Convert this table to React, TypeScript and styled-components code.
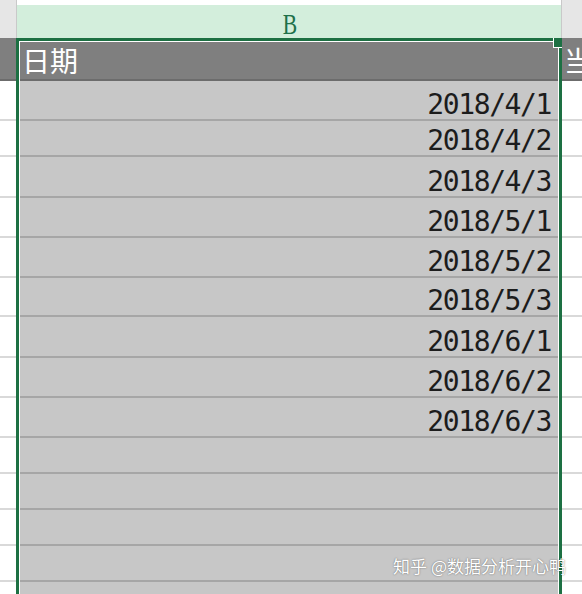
import React from "react";
import styled, { createGlobalStyle } from "styled-components";

const Global = createGlobalStyle`
  html, body { margin: 0; padding: 0; background: #ffffff; overflow: hidden; }
  #root { width: 582px; height: 594px; }
`;

const GREEN = "#1d7043";

const Page = styled.div`
  position: relative;
  width: 582px;
  height: 594px;
  overflow: hidden;
  background: #ffffff;
  font-family: "Noto Sans CJK SC", "Noto Sans", sans-serif;
`;

const GridRow = styled.div<{ $h: number }>`
  display: grid;
  grid-template-columns: 17px 544px 1fr;
  height: ${(p) => p.$h}px;
`;

const ColHeadSide = styled.div`
  background: #e6e6e6;
  border-right: 1px solid #c9c9c9;
`;

const ColHeadSideRight = styled.div`
  background: #e6e6e6;
  border-left: 1px solid #c9c9c9;
`;

const ColHeadMain = styled.div`
  margin-top: 5px;
  background: #d3eedc;
  border-bottom: 3px solid ${GREEN};
  display: flex;
  justify-content: center;
  align-items: flex-start;
  padding-top: 4px;
  padding-left: 3px;
`;

const ColLetter = styled.span`
  display: inline-block;
  font-family: "Liberation Serif", "DejaVu Serif", serif;
  font-size: 30px;
  line-height: 1;
  color: #20704a;
  transform: scaleX(0.72);
`;

const Cell = styled.div<{ $kind: "side" | "main" | "head" }>`
  box-sizing: border-box;
  overflow: hidden;
  white-space: nowrap;
  display: flex;
  background: ${(p) =>
    p.$kind === "head" ? "#7f7f7f" : p.$kind === "main" ? "#c7c7c7" : "#ffffff"};
  border-bottom: 2px solid
    ${(p) =>
      p.$kind === "head" ? "#6c6c6c" : p.$kind === "main" ? "#a6a6a6" : "#d9d9d9"};
`;

const HeadText = styled.span`
  font-family: "Noto Sans CJK SC", "Noto Sans", sans-serif;
  font-size: 28px;
  line-height: 1;
  color: #ffffff;
  align-self: center;
  padding-top: 2px;
`;

const HeadCell = styled(Cell)`
  padding-left: 5px;
`;

const HeadCellRight = styled(Cell)`
  padding-left: 3px;
`;

const DateCell = styled(Cell)`
  justify-content: flex-end;
  align-items: flex-end;
  padding-right: 10px;
`;

const DateText = styled.span`
  font-family: "DejaVu Sans Mono", "Liberation Mono", monospace;
  font-size: 28px;
  line-height: 1;
  letter-spacing: -1.4px;
  color: #1c1c1c;
`;

const Selection = styled.div`
  position: absolute;
  left: 16px;
  top: 38px;
  width: 546px;
  height: 600px;
  box-sizing: border-box;
  border: 3px solid ${GREEN};
  box-shadow: inset 0 0 0 1px #ffffff;
  pointer-events: none;
`;

const Handle = styled.div`
  position: absolute;
  left: 553px;
  top: 38px;
  width: 9px;
  height: 10px;
  box-sizing: border-box;
  background: ${GREEN};
  border-left: 1px solid #ffffff;
  border-bottom: 1px solid #ffffff;
`;

const Watermark = styled.div`
  position: absolute;
  right: 16px;
  top: 556px;
  font-family: "Noto Sans CJK SC", "Noto Sans", sans-serif;
  font-size: 17px;
  line-height: 1.2;
  color: #ffffff;
  text-shadow: 0 0 2px rgba(0, 0, 0, 0.35), 0 0 1px rgba(0, 0, 0, 0.3);
  white-space: nowrap;
`;

const rows: { h: number; v: string }[] = [
  { h: 40, v: "2018/4/1" },
  { h: 36, v: "2018/4/2" },
  { h: 41, v: "2018/4/3" },
  { h: 40, v: "2018/5/1" },
  { h: 40, v: "2018/5/2" },
  { h: 39, v: "2018/5/3" },
  { h: 41, v: "2018/6/1" },
  { h: 40, v: "2018/6/2" },
  { h: 40, v: "2018/6/3" },
  { h: 36, v: "" },
  { h: 36, v: "" },
  { h: 36, v: "" },
  { h: 36, v: "" },
  { h: 36, v: "" },
];

export default function App() {
  return (
    <>
      <Global />
      <Page>
        <GridRow $h={38}>
          <ColHeadSide />
          <ColHeadMain>
            <ColLetter>B</ColLetter>
          </ColHeadMain>
          <ColHeadSideRight />
        </GridRow>
        <GridRow $h={43}>
          <Cell $kind="head" />
          <HeadCell $kind="head">
            <HeadText>日期</HeadText>
          </HeadCell>
          <HeadCellRight $kind="head">
            <HeadText>当月销量</HeadText>
          </HeadCellRight>
        </GridRow>
        {rows.map((r, i) => (
          <GridRow key={i} $h={r.h}>
            <Cell $kind="side" />
            <DateCell $kind="main">
              <DateText>{r.v}</DateText>
            </DateCell>
            <Cell $kind="side" />
          </GridRow>
        ))}
        <Selection />
        <Handle />
        <Watermark>知乎 @数据分析开心鸭</Watermark>
      </Page>
    </>
  );
}
